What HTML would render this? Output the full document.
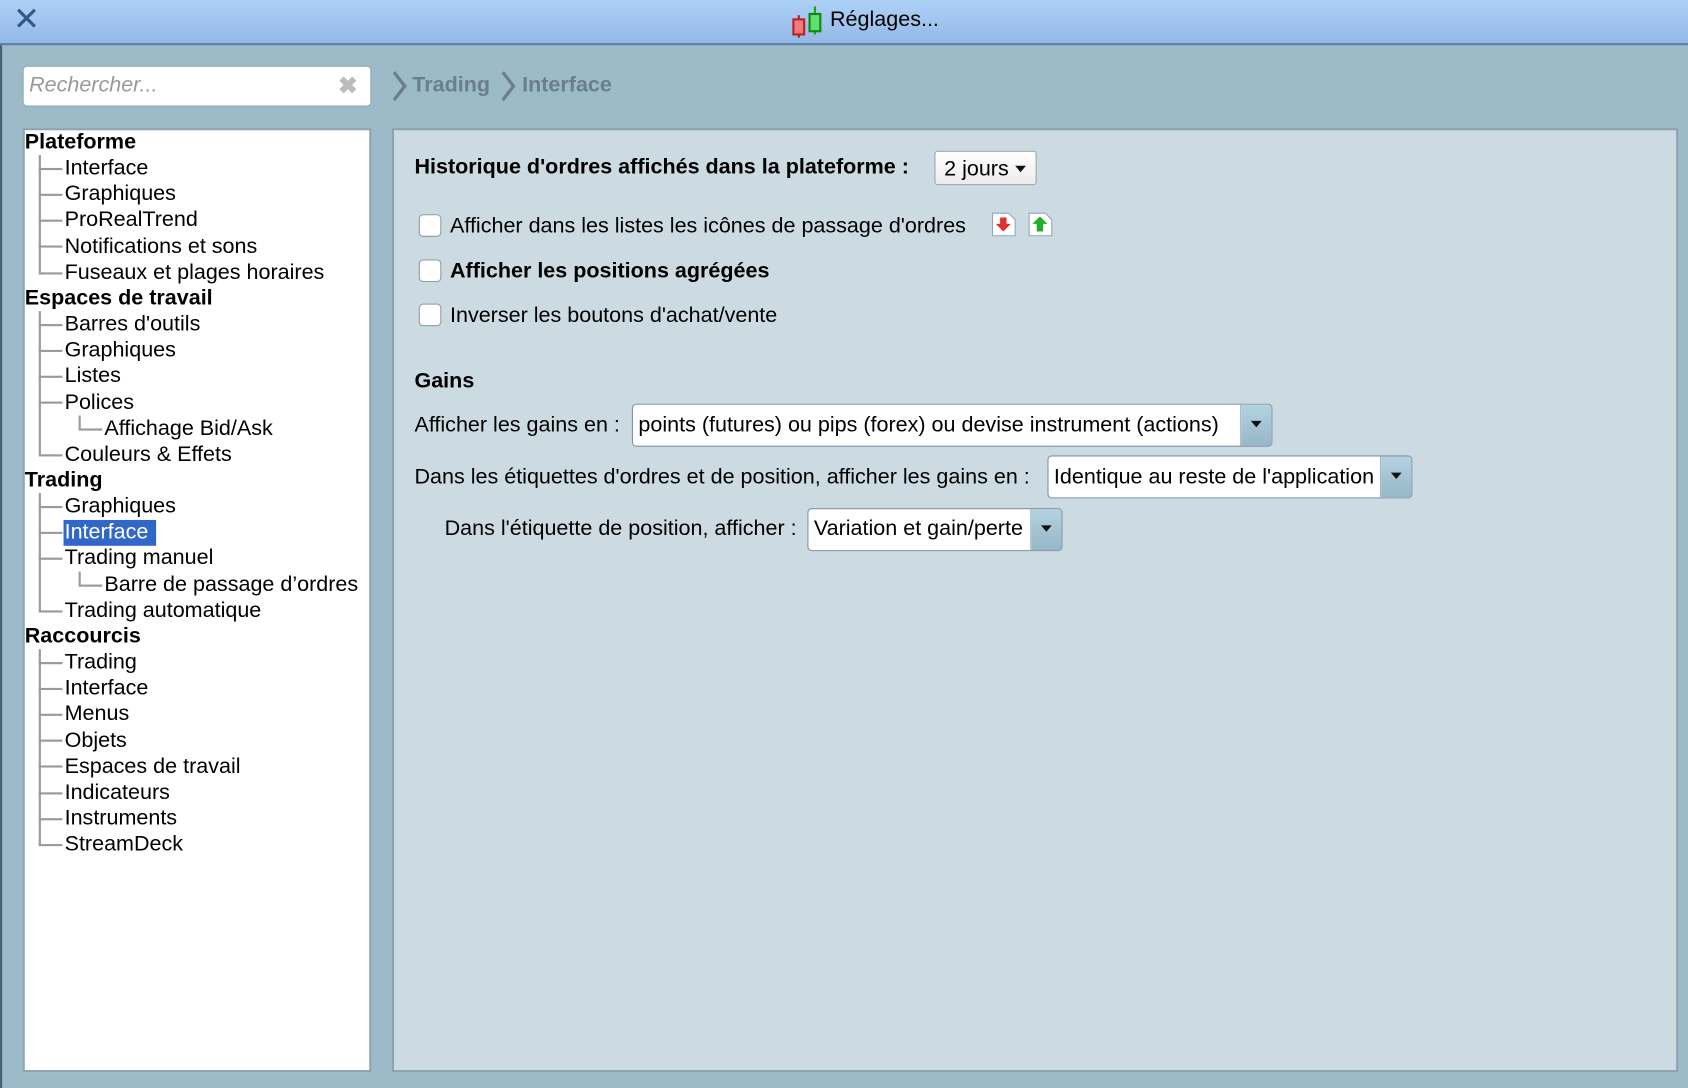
<!DOCTYPE html>
<html><head><meta charset="utf-8"><style>
html,body{margin:0;padding:0;width:1688px;height:1088px;overflow:hidden;background:#9cbac7}
#w{position:absolute;left:0;top:0;width:1568px;height:1011px;transform:scale(1.07653);transform-origin:0 0;font-family:"Liberation Sans",Arial,sans-serif;color:#000;background:#9cbac7}
.a{position:absolute;white-space:nowrap}
#tb{position:absolute;left:0;top:0;width:1568px;height:40px;background:linear-gradient(#aed1f8,#94b9e6);border-bottom:2px solid #5b80ad}
.t{position:absolute;font-size:20px;line-height:24px;white-space:nowrap}
.b{font-weight:bold}
.vl{position:absolute;width:1.6px;background:#9a9a9a}
.hl{position:absolute;height:1.6px;background:#9a9a9a}
.cb{position:absolute;left:389px;width:19px;height:19px;background:#fff;border:1px solid #8e9aa3;border-radius:4px}
.sel{position:absolute;border:1px solid #7c95a6;border-radius:4px;background:#fff;box-sizing:border-box}
.arr{position:absolute;top:0;right:0;bottom:0;width:28px;background:linear-gradient(#b5d2e0,#95b7c6);border-left:1px solid #8aa5b3;border-radius:0 3px 3px 0}
.arr:after{content:"";position:absolute;left:9px;top:15px;border-left:5px solid transparent;border-right:5px solid transparent;border-top:6px solid #111}
</style></head><body><div id="w">
<div class="a" style="left:0;top:40px;width:2px;height:971px;background:#4a6078"></div>
<div id="tb"></div>
<div class="a" style="left:12px;top:3px;font-size:30px;color:#2f5a8a;line-height:32px">✕</div>
<svg class="a" style="left:733px;top:4px" width="32" height="32"><line x1="9" y1="10" x2="9" y2="31" stroke="#a22" stroke-width="2"/><rect x="4" y="14" width="10" height="14" fill="#f27a7a" stroke="#b22" stroke-width="2"/><line x1="24" y1="2" x2="24" y2="28" stroke="#1a1" stroke-width="2"/><rect x="19" y="9" width="10" height="16" fill="#5fe26a" stroke="#181" stroke-width="2"/></svg>
<div class="a" style="left:771px;top:7px;font-size:20px">Réglages...</div>

<div class="a" style="left:21px;top:61px;width:324px;height:38px;background:#fff;border:1px solid #8fa8b5;border-radius:4px;box-sizing:border-box"></div>
<div class="a" style="left:27px;top:68px;font-size:20px;font-style:italic;color:#999">Rechercher...</div>
<div class="a" style="left:314px;top:67px;font-size:22px;color:#bbb;font-weight:bold">✖</div>

<svg class="a" style="left:362px;top:65px" width="20" height="32"><path d="M4 2 L14 15 L4 28" fill="none" stroke="#6a7f89" stroke-width="3"/></svg>
<div class="a b" style="left:383px;top:68px;font-size:20px;color:#6a7f89">Trading</div>
<svg class="a" style="left:463px;top:65px" width="20" height="32"><path d="M4 2 L14 15 L4 28" fill="none" stroke="#6a7f89" stroke-width="3"/></svg>
<div class="a b" style="left:485px;top:68px;font-size:20px;color:#6a7f89">Interface</div>

<div class="a" style="left:21px;top:119px;width:324px;height:877px;background:#fff;border:2px solid #8aa3b0;box-sizing:border-box"></div>
<div class="a" style="left:364px;top:119px;width:1195px;height:877px;background:#ccdbe2;border:2px solid #8aa3b0;box-sizing:border-box"></div>

<div class="vl" style="left:36px;top:144px;height:109px"></div>
<div class="vl" style="left:36px;top:289px;height:134px"></div>
<div class="vl" style="left:73px;top:386px;height:13px"></div>
<div class="vl" style="left:36px;top:458px;height:110px"></div>
<div class="vl" style="left:73px;top:531px;height:13px"></div>
<div class="vl" style="left:36px;top:603px;height:182px"></div>
<div class="hl" style="left:36px;top:156px;width:22px"></div>
<div class="hl" style="left:36px;top:180px;width:22px"></div>
<div class="hl" style="left:36px;top:204px;width:22px"></div>
<div class="hl" style="left:36px;top:228px;width:22px"></div>
<div class="hl" style="left:36px;top:253px;width:22px"></div>
<div class="hl" style="left:36px;top:301px;width:22px"></div>
<div class="hl" style="left:36px;top:325px;width:22px"></div>
<div class="hl" style="left:36px;top:349px;width:22px"></div>
<div class="hl" style="left:36px;top:373px;width:22px"></div>
<div class="hl" style="left:73px;top:398px;width:22px"></div>
<div class="hl" style="left:36px;top:422px;width:22px"></div>
<div class="hl" style="left:36px;top:470px;width:22px"></div>
<div class="hl" style="left:36px;top:494px;width:22px"></div>
<div class="hl" style="left:36px;top:518px;width:22px"></div>
<div class="hl" style="left:73px;top:543px;width:22px"></div>
<div class="hl" style="left:36px;top:567px;width:22px"></div>
<div class="hl" style="left:36px;top:615px;width:22px"></div>
<div class="hl" style="left:36px;top:639px;width:22px"></div>
<div class="hl" style="left:36px;top:663px;width:22px"></div>
<div class="hl" style="left:36px;top:687px;width:22px"></div>
<div class="hl" style="left:36px;top:711px;width:22px"></div>
<div class="hl" style="left:36px;top:736px;width:22px"></div>
<div class="hl" style="left:36px;top:760px;width:22px"></div>
<div class="hl" style="left:36px;top:784px;width:22px"></div>
<div class="a" style="left:59px;top:483px;width:86px;height:24px;background:#3168c8"></div>

<div class="t b" style="left:23px;top:120px">Plateforme</div>
<div class="t" style="left:60px;top:144px">Interface</div>
<div class="t" style="left:60px;top:168px">Graphiques</div>
<div class="t" style="left:60px;top:192px">ProRealTrend</div>
<div class="t" style="left:60px;top:217px">Notifications et sons</div>
<div class="t" style="left:60px;top:241px">Fuseaux et plages horaires</div>
<div class="t b" style="left:23px;top:265px">Espaces de travail</div>
<div class="t" style="left:60px;top:289px">Barres d'outils</div>
<div class="t" style="left:60px;top:313px">Graphiques</div>
<div class="t" style="left:60px;top:337px">Listes</div>
<div class="t" style="left:60px;top:362px">Polices</div>
<div class="t" style="left:97px;top:386px">Affichage Bid/Ask</div>
<div class="t" style="left:60px;top:410px">Couleurs &amp; Effets</div>
<div class="t b" style="left:23px;top:434px">Trading</div>
<div class="t" style="left:60px;top:458px">Graphiques</div>
<div class="t" style="left:60px;top:482px;color:#fff">Interface</div>
<div class="t" style="left:60px;top:506px">Trading manuel</div>
<div class="t" style="left:97px;top:531px">Barre de passage d’ordres</div>
<div class="t" style="left:60px;top:555px">Trading automatique</div>
<div class="t b" style="left:23px;top:579px">Raccourcis</div>
<div class="t" style="left:60px;top:603px">Trading</div>
<div class="t" style="left:60px;top:627px">Interface</div>
<div class="t" style="left:60px;top:651px">Menus</div>
<div class="t" style="left:60px;top:676px">Objets</div>
<div class="t" style="left:60px;top:700px">Espaces de travail</div>
<div class="t" style="left:60px;top:724px">Indicateurs</div>
<div class="t" style="left:60px;top:748px">Instruments</div>
<div class="t" style="left:60px;top:772px">StreamDeck</div>

<div class="t b" style="left:385px;top:143px">Historique d'ordres affichés dans la plateforme :</div>
<div class="a" style="left:868px;top:140px;width:95px;height:32px;background:linear-gradient(#fff,#ececec);border:1px solid #9aa8b0;border-radius:3px;box-sizing:border-box"></div>
<div class="t" style="left:877px;top:145px">2 jours</div>
<div class="a" style="left:943px;top:154px;border-left:5px solid transparent;border-right:5px solid transparent;border-top:6px solid #111"></div>

<div class="cb" style="top:199px"></div>
<div class="t" style="left:418px;top:198px">Afficher dans les listes les icônes de passage d'ordres</div>
<svg class="a" style="left:921px;top:197px" width="24" height="24"><path d="M1 1 H16 L22 7 V22 H1 Z" fill="#fff" stroke="#8fa4c0"/><path d="M8 5 H14 V11 H18 L11 18 L4 11 H8 Z" fill="#e23030"/></svg>
<svg class="a" style="left:955px;top:197px" width="24" height="24"><path d="M1 1 H16 L22 7 V22 H1 Z" fill="#fff" stroke="#8fa4c0"/><path d="M11 4 L18 11 H14 V18 H8 V11 H4 Z" fill="#22b022"/></svg>
<div class="cb" style="top:241px"></div>
<div class="t b" style="left:418px;top:240px">Afficher les positions agrégées</div>
<div class="cb" style="top:282px"></div>
<div class="t" style="left:418px;top:281px">Inverser les boutons d'achat/vente</div>

<div class="t b" style="left:385px;top:342px">Gains</div>
<div class="t" style="left:385px;top:383px">Afficher les gains en :</div>
<div class="sel" style="left:587px;top:375px;width:595px;height:40px"><div class="arr"></div></div>
<div class="t" style="left:593px;top:383px">points (futures) ou pips (forex) ou devise instrument (actions)</div>
<div class="t" style="left:385px;top:431px">Dans les étiquettes d'ordres et de position, afficher les gains en :</div>
<div class="sel" style="left:973px;top:423px;width:339px;height:40px"><div class="arr"></div></div>
<div class="t" style="left:979px;top:431px">Identique au reste de l'application</div>
<div class="t" style="left:413px;top:479px">Dans l'étiquette de position, afficher :</div>
<div class="sel" style="left:750px;top:472px;width:237px;height:40px"><div class="arr"></div></div>
<div class="t" style="left:756px;top:479px">Variation et gain/perte</div>
</div></body></html>
